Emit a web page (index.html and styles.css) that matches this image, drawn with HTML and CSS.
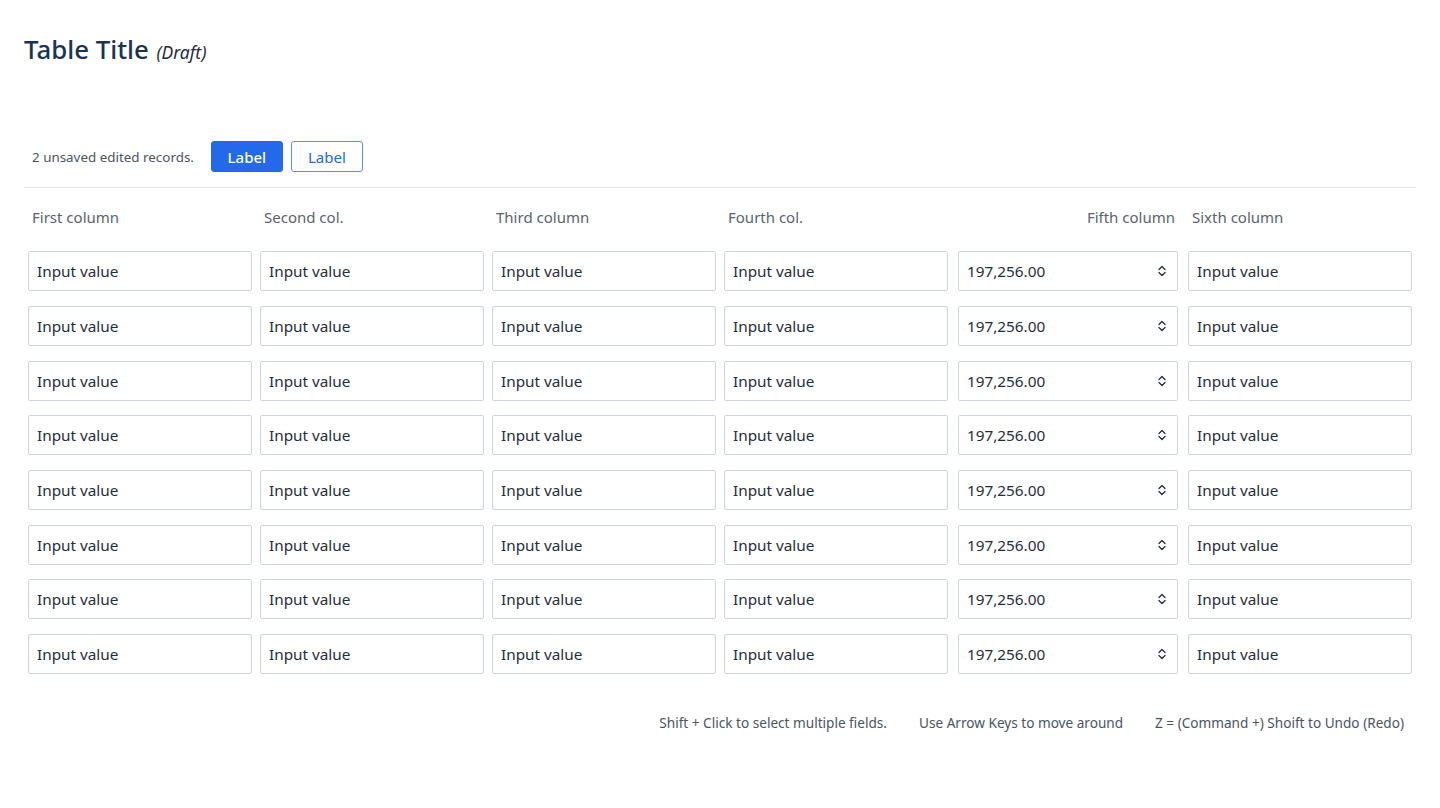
FILE: index.html
```html
<!DOCTYPE html>
<html lang="en">
<head>
<meta charset="utf-8">
<title>Table Title</title>
<link rel="stylesheet" href="styles.css">
</head>
<body>
<div class="page">
  <h1 class="title">Table Title <em class="draft">(Draft)</em></h1>

  <div class="toolbar">
    <span class="status">2 unsaved edited records.</span>
    <button class="btn btn-primary">Label</button>
    <button class="btn btn-outline">Label</button>
  </div>

  <table class="grid">
    <thead>
      <tr>
        <th>First column</th>
        <th>Second col.</th>
        <th>Third column</th>
        <th>Fourth col.</th>
        <th class="num">Fifth column</th>
        <th>Sixth column</th>
      </tr>
    </thead>
    <tbody id="rows"></tbody>
  </table>

  <div class="hints">
    <span>Shift + Click to select multiple fields.</span>
    <span>Use Arrow Keys to move around</span>
    <span>Z = (Command +) Shoift to Undo (Redo)</span>
  </div>
</div>
<script>
  var tb = document.getElementById('rows');
  var html = '';
  for (var i = 0; i < 8; i++) {
    html += '<tr>' +
      '<td><div class="field">Input value</div></td>' +
      '<td><div class="field">Input value</div></td>' +
      '<td><div class="field">Input value</div></td>' +
      '<td><div class="field">Input value</div></td>' +
      '<td class="numcell"><div class="field number"><span>197,256.00</span>' +
      '<svg class="stepper" width="10" height="14" viewBox="0 0 10 14"><path d="M2 5.5 L5 2.5 L8 5.5 M2 8.5 L5 11.5 L8 8.5" fill="none" stroke="#1f2d3d" stroke-width="1.3" stroke-linecap="round" stroke-linejoin="round"/></svg>' +
      '</div></td>' +
      '<td><div class="field">Input value</div></td>' +
      '</tr>';
  }
  tb.innerHTML = html;
</script>
</body>
</html>
```

FILE: styles.css
```css
* { box-sizing: border-box; }
html, body { margin: 0; padding: 0; background: #ffffff; }
body {
  font-family: "Noto Sans", "Open Sans", sans-serif;
  color: #1f2d3d;
}
.page {
  padding: 32px 24px 0 24px;
}
.title {
  margin: 0;
  font-size: 25.8px;
  line-height: 34px;
  font-weight: 500;
  color: #1b3352;
}
.draft {
  font-size: 17.5px;
  font-weight: 400;
  color: #1f2d3d;
  margin-left: 1px;
}
.toolbar {
  display: flex;
  align-items: center;
  margin-top: 72px;
  padding: 0 0 15px 8px;
  border-bottom: 1px solid #e5e8ec;
}
.status {
  font-size: 13.4px;
  color: #4a5562;
  margin-right: 17px;
}
.btn {
  font-family: inherit;
  font-size: 15px;
  height: 31px;
  width: 72px;
  border-radius: 3px;
  margin-right: 8px;
  padding: 0;
  cursor: pointer;
}
.btn-primary {
  background: #2369e9;
  border: 1px solid #2369e9;
  color: #ffffff;
  font-weight: 500;
}
.btn-outline {
  background: #ffffff;
  border: 1px solid #5a8ff0;
  color: #2369e9;
}
.grid {
  width: 100%;
  border-collapse: collapse;
  table-layout: fixed;
}
.grid th {
  text-align: left;
  font-weight: 400;
  font-size: 15px;
  color: #59636e;
  padding: 19px 8px 0 8px;
  height: 56px;
  vertical-align: top;
}
.grid th.num { text-align: right; padding-right: 9px; }
.grid td {
  padding: 7.35px 4px;
}
.grid td.numcell { padding: 7.35px 6px; }
.field {
  height: 40px;
  border: 1px solid #cfd5dc;
  border-radius: 2px;
  padding: 0 8px;
  display: flex;
  align-items: center;
  font-size: 15.3px;
  color: #1f2d3d;
  background: #fff;
}
.field.number { justify-content: space-between; padding-right: 10px; }
.stepper { display: block; }
.hints {
  display: flex;
  justify-content: flex-end;
  gap: 32px;
  margin-top: 31px;
  padding-right: 12px;
  font-size: 13.6px;
  color: #4a5562;
}
```
